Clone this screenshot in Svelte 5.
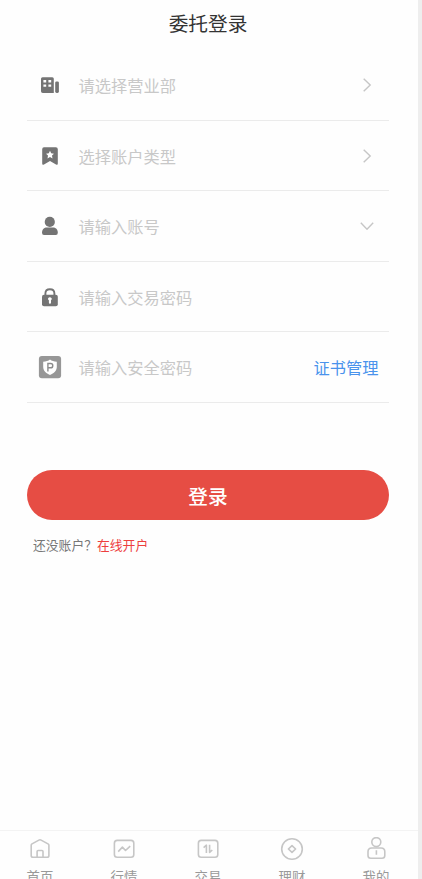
<script lang="ts">
  type Field = {
    icon: 'branch' | 'type' | 'user' | 'lock' | 'shield';
    placeholder: string;
    trailing?: 'right' | 'down' | 'cert';
  };

  const fields: Field[] = [
    { icon: 'branch', placeholder: '请选择营业部', trailing: 'right' },
    { icon: 'type', placeholder: '选择账户类型', trailing: 'right' },
    { icon: 'user', placeholder: '请输入账号', trailing: 'down' },
    { icon: 'lock', placeholder: '请输入交易密码' },
    { icon: 'shield', placeholder: '请输入安全密码', trailing: 'cert' },
  ];

  const tabs = [
    { icon: 'home', label: '首页' },
    { icon: 'chart', label: '行情' },
    { icon: 'trade', label: '交易' },
    { icon: 'wealth', label: '理财' },
    { icon: 'me', label: '我的' },
  ];
</script>

<div class="screen">
  <header>委托登录</header>

  <main>
    {#each fields as field}
      <div class="field">
        <span class="icon">
          <svg width="24" height="24" viewBox="0 0 24 24">
            {#if field.icon === 'branch'}
              <path
                fill="#747474"
                fill-rule="evenodd"
                d="M4.5 4.3H14.3Q15.8 4.3 15.8 5.8V20H4.8Q3 20 3 18.2V5.8Q3 4.3 4.5 4.3ZM5.4 7V9.4H8.2V7ZM10.4 7V9.4H13.2V7ZM5.4 11.4V13.8H8.2V11.4ZM10.4 11.4V13.8H13.2V11.4Z"
              />
              <rect x="17.2" y="8.4" width="3.7" height="11.6" rx="1.4" fill="#747474" />
            {:else if field.icon === 'type'}
              <path fill="#747474" d="M6 3.2H17.8Q19.8 3.2 19.8 5.2V19.4Q19.8 21.6 18 20.4L12 17L6 20.4Q4.2 21.6 4.2 19.4V5.2Q4.2 3.2 6 3.2Z" />
              <path fill="#fff" d="M12 6.7L13.2 9.3L16 9.7L14 11.6L14.5 14.4L12 13.1L9.5 14.4L10 11.6L8 9.7L10.8 9.3Z" />
            {:else if field.icon === 'user'}
              <circle cx="11.8" cy="7.9" r="5.1" fill="#747474" />
              <path fill="#747474" d="M4 18.8C4 15.4 6.3 13.6 8.9 13.6H14.9C17.6 13.6 19.8 15.4 19.8 18.8Q19.8 21 17.8 21H6Q4 21 4 18.8Z" />
            {:else if field.icon === 'lock'}
              <path fill="none" stroke="#747474" stroke-width="1.9" d="M7.4 10.5V8.4C7.4 5.6 9.3 4.2 11.9 4.2S16.4 5.6 16.4 8.4V10.5" />
              <rect x="4" y="9.8" width="15.8" height="11.4" rx="2" fill="#747474" />
              <path fill="#fff" d="M10 14a1.9 1.7 0 1 1 3 1.3V17.8a1 1 0 0 1-2.1 0V15.3A1.8 1.8 0 0 1 10 14Z" />
            {:else}
              <rect x="0.9" y="0.9" width="22.2" height="22.4" rx="3" fill="#979797" />
              <path fill="#fff" d="M12 4.5C13.7 5.9 16 6.6 18.8 6.8V12.1C18.8 15.8 16 18.4 12 20.1C8 18.4 5.2 15.8 5.2 12.1V6.8C8 6.6 10.3 5.9 12 4.5Z" />
              <path fill="none" stroke="#8c8c8c" stroke-width="1.4" d="M9.9 16.4V8.5H12.6C15.5 8.5 15.5 12.8 12.6 12.8H9.9" />
            {/if}
          </svg>
        </span>
        <span class="placeholder">{field.placeholder}</span>
        {#if field.trailing === 'cert'}
          <span class="cert">证书管理</span>
        {:else if field.trailing}
          <svg class="arrow" class:down={field.trailing === 'down'} width="16" height="16" viewBox="0 0 16 16">
            <path d="M4.7 1.8L11.2 8L4.7 14.2" />
          </svg>
        {/if}
      </div>
    {/each}

    <button class="login">登录</button>
    <p class="signup">还没账户？<span>在线开户</span></p>
  </main>

  <nav>
    {#each tabs as tab}
      <div class="tab">
        <svg width="24" height="24" viewBox="0 0 24 24">
          {#if tab.icon === 'home'}
            <path d="M3.2 8.2Q3.2 7.4 4 6.9L10.9 3.1Q12 2.5 13.1 3.1L20 6.9Q20.9 7.4 20.9 8.2V18.4Q20.9 20.2 19.1 20.2H5Q3.2 20.2 3.2 18.4Z" />
            <path d="M9.1 20V14.5Q9.1 13.5 10.1 13.5H14Q15 13.5 15 14.5V20" />
          {:else if tab.icon === 'chart'}
            <rect x="2.4" y="3.4" width="19.4" height="16.9" rx="2.8" />
            <path d="M6.2 14.6L10.4 10.1L13.5 13.5L18.2 9.1" />
          {:else if tab.icon === 'trade'}
            <rect x="2.4" y="3.4" width="19.4" height="16.9" rx="2.8" />
            <path d="M7.6 10.6L10.4 8.2V16M13.6 7.8V15.4L16.3 13" />
          {:else if tab.icon === 'wealth'}
            <circle cx="12" cy="12" r="10.3" />
            <path d="M12 8.6L15.6 12L12 15.4L8.4 12Z" />
          {:else}
            <circle cx="12.3" cy="5.1" r="4.5" />
            <path d="M7.7 11H17.1Q20.8 11 20.8 14.7V18.5Q20.8 21.3 18 21.3H6.8Q4 21.3 4 18.5V14.7Q4 11 7.7 11ZM12.4 13.2V17.7" />
          {/if}
        </svg>
        <span>{tab.label}</span>
      </div>
    {/each}
  </nav>
</div>

<style>
  :global(body) {
    background: #eee;
  }
  .screen {
    display: flex;
    flex-direction: column;
    width: 418px;
    height: 879px;
    overflow: hidden;
    background: #fefefe;
    font-family: 'Noto Sans CJK SC', sans-serif;
  }
  header {
    height: 50px;
    padding-right: 2px;
    box-sizing: border-box;
    flex-shrink: 0;
    text-align: center;
    font-size: 19.7px;
    line-height: 46px;
    color: #333;
  }
  main {
    flex: 1;
    padding: 0 29px 0 27px;
  }
  .field {
    display: flex;
    align-items: center;
    height: 70.5px;
    box-sizing: border-box;
    border-bottom: 1px solid #ebebeb;
    padding-top: 0.5px;
  }
  .icon {
    display: flex;
    justify-content: center;
    width: 46px;
    margin-right: 5.5px;
  }
  .placeholder {
    flex: 1;
    font-size: 16.25px;
    line-height: 24px;
    color: #c8c8c8;
  }
  .cert {
    margin-right: 10.5px;
    font-size: 16.25px;
    line-height: 24px;
    color: #4a93ec;
  }
  .arrow {
    margin-right: 14px;
    fill: none;
    stroke: #c6c6c6;
    stroke-width: 1.4;
  }
  .arrow.down {
    transform: rotate(90deg);
  }
  .login {
    display: block;
    width: 100%;
    height: 50px;
    margin-top: 67.5px;
    padding: 0;
    border: none;
    border-radius: 25px;
    background: #e64d44;
    color: #fff;
    font-family: inherit;
    font-size: 19.7px;
    font-weight: 500;
  }
  .signup {
    margin: 15px 0 0 6px;
    font-size: 12.8px;
    line-height: 20px;
    color: #777;
  }
  .signup span {
    color: #ed3f3f;
  }
  nav {
    display: flex;
    flex-shrink: 0;
    height: 49px;
    margin-left: -2px;
    border-top: 1px solid #f3f3f3;
    box-sizing: border-box;
  }
  .tab {
    display: flex;
    flex-direction: column;
    align-items: center;
    flex: 0 0 84px;
    padding-top: 6px;
    font-size: 13.4px;
    line-height: 20px;
    color: #999;
  }
  .tab svg {
    flex-shrink: 0;
    margin-bottom: 5px;
    fill: none;
    stroke: #c6c6c6;
    stroke-width: 1.6;
    stroke-linejoin: round;
  }
</style>
